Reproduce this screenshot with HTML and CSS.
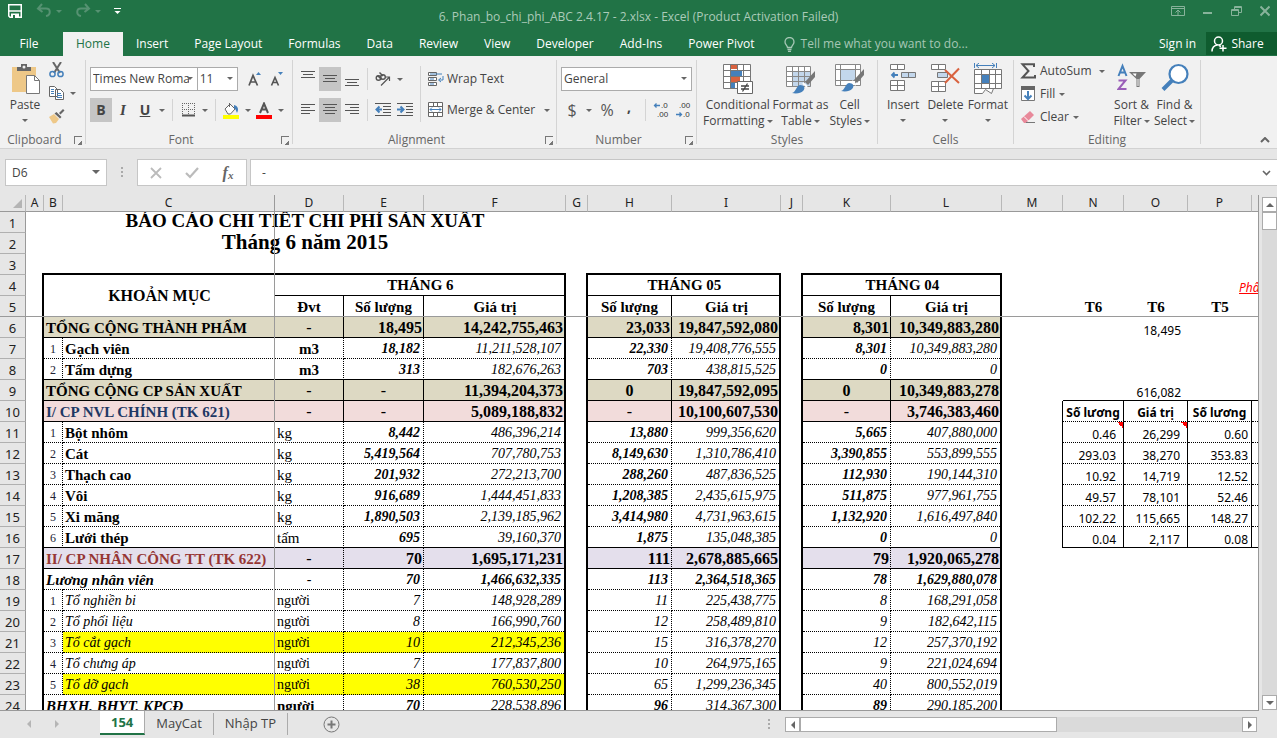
FILE: index.html
```html
<!DOCTYPE html>
<html lang="en">
<head>
<meta charset="utf-8">
<title>6. Phan_bo_chi_phi_ABC 2.4.17 - 2.xlsx - Excel</title>
<link rel="stylesheet" href="styles.css">
</head>
<body>
<header class="titlebar">
  <div class="quick">
    <button aria-label="Save"><svg width="16" height="16" viewBox="0 0 16 16"><path d="M1.75 1.75h12.5v12.5H3l-1.250-1.250z" fill="none" stroke="#fff" stroke-width="1.500"/><path d="M2 8h12" stroke="#fff" stroke-width="1.500"/><path d="M4 10.500h8V15H4z" fill="#fff"/><path d="M6 12h2v3H6z" fill="#217346"/></svg></button>
    <button class="dim split" aria-label="Undo"><svg width="16" height="16" viewBox="0 0 16 16"><path d="M6 1 2 5.500 6.500 9M2.500 5.500H10c5 0 5 6.500 0 7.500" fill="none" stroke="currentColor" stroke-width="2"/></svg><i class="caret"></i></button>
    <button class="dim split" aria-label="Redo"><svg width="16" height="16" viewBox="0 0 16 16"><path d="M10 1l4 4.500L9.500 9M13.500 5.500H6c-5 0-5 6.500 0 7.500" fill="none" stroke="currentColor" stroke-width="2"/></svg><i class="caret"></i></button>
    <button aria-label="Customize"><svg width="7" height="8" viewBox="0 0 7 8"><path d="M0 1.500h7" stroke="#fff"/><path d="M.5 4h6l-3 3z" fill="#fff"/></svg></button>
  </div>
  <h1>6. Phan_bo_chi_phi_ABC 2.4.17 - 2.xlsx - Excel (Product Activation Failed)</h1>
  <div class="window">
    <button aria-label="Ribbon options"><svg width="14" height="12" viewBox="0 0 14 12" fill="none" stroke="currentColor"><path d="M.5 1.500h13v9H.5zM1 3.500h12M7 10V5M4.500 7.500 7 5l2.500 2.500"/></svg></button>
    <button aria-label="Minimize"><svg width="10" height="12" viewBox="0 0 10 12"><path d="M0 7h9v2H0z" fill="currentColor"/></svg></button>
    <button aria-label="Restore"><svg width="11" height="12" viewBox="0 0 11 12" fill="none" stroke="currentColor"><path d="M.5 4.500h7v6h-7zM.5 5.500h7M3.500 4V1.500h7v6H8M3.500 2.500h7"/></svg></button>
    <button aria-label="Close"><svg width="10" height="12" viewBox="0 0 10 12" fill="none" stroke="currentColor" stroke-width="2"><path d="M.5 1.500l9 9M9.500 1.500l-9 9"/></svg></button>
  </div>
</header>
<nav class="tabs">
  <button class="file">File</button><button class="on">Home</button><button>Insert</button><button>Page Layout</button><button>Formulas</button><button>Data</button><button>Review</button><button>View</button><button>Developer</button><button>Add-Ins</button><button>Power Pivot</button>
  <button class="tell"><svg width="11" height="15" viewBox="0 0 11 15" fill="none" stroke="currentColor" stroke-width="1.300"><path d="M3.500 10.500C3.500 8.500 1 7.500 1 5a4.500 4.500 0 0 1 9 0c0 2.500-2.500 3.500-2.500 5.500zM3.500 12.500h4M4 14.300h3"/></svg>Tell me what you want to do...</button>
  <button class="sign">Sign in</button>
  <button class="share"><svg width="16" height="16" viewBox="0 0 16 16" fill="none" stroke="#fff" stroke-width="1.500"><circle cx="7.500" cy="5" r="4"/><path d="M1 15.500c0-4 2-6 5.500-6.500M8 9.500l2 1M12 9v6.500M8.500 12.300H15.500"/></svg>Share</button>
</nav>

<section class="ribbon">
  <div class="group clipboard">
    <div class="body">
      <button class="big"><svg width="32" height="32" viewBox="-2 0 32 32"><path d="M1 4h24v25H1z" fill="#eec888"/><path d="M6 8V4h4V1h6v3h4v4z" fill="#666"/><circle cx="13" cy="4" r="1.500" fill="#f1f1f1"/><path d="M15.500 12.500h8l5 5v13h-13z" fill="#fff" stroke="#777"/><path d="M23.500 12.500v5h5" fill="none" stroke="#777"/></svg><span>Paste</span><i class="caret"></i></button>
      <div class="stack clip">
        <button aria-label="Cut"><svg width="16" height="16" viewBox="0 0 16 16" fill="none"><path d="M4 0l7 11M12 0 5 11" stroke="#666" stroke-width="2"/><circle cx="3.500" cy="12" r="2.600" stroke="#4580bb" stroke-width="1.500"/><circle cx="11.500" cy="12" r="2.600" stroke="#4580bb" stroke-width="1.500"/></svg></button>
        <button class="split" aria-label="Copy"><svg width="16" height="16" viewBox="0 0 16 16" fill="#fff" stroke="#666"><path d="M.5 1.500h5l3 3v7h-8zM6.500 4.500h5l3 3v7h-8z"/><path d="M2 4.500h3M2 6.500h3M2 8.500h3M8 8.500h4M8 10.500h5M8 12.500h5" stroke="#4580bb"/></svg><i class="caret"></i></button>
        <button aria-label="Format Painter"><svg width="16" height="16" viewBox="0 0 16 16"><path d="M0 9l5-3 5 5-3 4-3 .5z" fill="#eec888"/><path d="M5.500 5.500l2-1.500 5 5-1.500 1.500zM10 5l4-4 1.500 1.500-4 4z" fill="#666"/></svg></button>
      </div>
    </div>
    <footer><span>Clipboard</span><button class="launch" aria-label="Clipboard settings"></button></footer>
  </div>

  <div class="group font">
    <div class="body rows">
      <div class="row">
        <label class="combo face"><select aria-label="Font"><option>Times New Roma</option></select></label><label class="combo size"><select aria-label="Font size"><option>11</option></select></label>
        <button class="tool grow" aria-label="Increase font size"><svg width="14" height="16" viewBox="0 0 14 16"><path d="M1 14.500 5 4.500 9.500 14.500M2.500 11h5.500" fill="none" stroke="#555" stroke-width="1.700"/><path d="M8 4l2.500-3L13 4z" fill="#4580bb"/></svg></button>
        <button class="tool" aria-label="Decrease font size"><svg width="14" height="16" viewBox="0 0 14 16"><path d="M1.500 14.500 5 6.500l3.500 8M3 11.500h4.500" fill="none" stroke="#555" stroke-width="1.600"/><path d="M8 1l2.500 3L13 1z" fill="#4580bb"/></svg></button>
      </div>
      <div class="row">
        <button class="tool on"><b>B</b></button><button class="tool ital">I</button><button class="tool"><u>U</u></button><button class="drop" aria-label="Underline options"><i class="caret"></i></button><i class="sep"></i>
        <button class="tool" aria-label="Borders"><svg width="13" height="14" viewBox="0 0 13 14" fill="none" stroke="#666"><path d="M.5 0v12M6.500 0v12M12.500 0v12M0 .5h13M0 6.500h13" stroke-dasharray="1 1"/><path d="M0 12.500h13" stroke-width="2" stroke="#555"/></svg></button><button class="drop" aria-label="Border options"><i class="caret"></i></button><i class="sep"></i>
        <button class="tool" aria-label="Fill Color"><svg width="16" height="17" viewBox="0 0 16 17"><path d="M2 7l5-5 5 5-4.500 5H5z" fill="#fff" stroke="#666"/><path d="M6.500 5V1" stroke="#666"/><path d="M11 3c4 1 5 4 3 8-1-2-1-4-3-5z" fill="#4580bb"/><path d="M0 13h16v4H0z" fill="#ff0"/></svg></button><button class="drop" aria-label="Fill options"><i class="caret"></i></button>
        <button class="tool" aria-label="Font Color"><svg width="16" height="17" viewBox="0 0 16 17"><path d="M4 11 8 1.500 12 11M5.500 7.500h5.500" fill="none" stroke="#555" stroke-width="2"/><path d="M0 13h16v4H0z" fill="#f00"/></svg></button><button class="drop" aria-label="Font color options"><i class="caret"></i></button>
      </div>
    </div>
    <footer><span>Font</span><button class="launch" aria-label="Font settings"></button></footer>
  </div>

  <div class="group align">
    <div class="body">
      <div class="rows">
        <div class="row">
          <button class="tool" aria-label="Top Align"><svg width="14" height="16" viewBox="0 0 14 16" stroke="#555"><path d="M0 .5h14M2 3.500h10M0 6.500h14"/></svg></button><button class="tool on" aria-label="Middle Align"><svg width="14" height="16" viewBox="0 0 14 16" stroke="#555"><path d="M0 4.500h14M2 7.500h10M0 10.500h14"/></svg></button><button class="tool" aria-label="Bottom Align"><svg width="14" height="16" viewBox="0 0 14 16" stroke="#555"><path d="M0 8.500h14M2 11.500h10M0 14.500h14"/></svg></button><i class="sep"></i>
          <button class="tool" aria-label="Orientation"><svg width="18" height="16" viewBox="0 0 18 16"><g fill="none" stroke="#555" stroke-width="1.400"><circle cx="4.500" cy="7" r="2.300"/><path d="M3.500 4.500 7.500 8.500"/><circle cx="9" cy="6" r="2.300"/><path d="M5.500 1.500 9 5"/></g><path d="M7 14.500 15 6.500M11.500 6H15.500V10" fill="none" stroke="#555" stroke-width="1.200"/></svg></button><button class="drop" aria-label="Orientation options"><i class="caret"></i></button>
        </div>
        <div class="row">
          <button class="tool" aria-label="Align Left"><svg width="14" height="14" viewBox="0 0 14 14" stroke="#555"><path d="M0 1.500h14M0 4.500h9M0 7.500h14M0 10.500h9"/></svg></button><button class="tool on" aria-label="Center"><svg width="14" height="14" viewBox="0 0 14 14" stroke="#555"><path d="M0 1.500h14M2 4.500h10M0 7.500h14M2 10.500h10"/></svg></button><button class="tool" aria-label="Align Right"><svg width="14" height="14" viewBox="0 0 14 14" stroke="#555"><path d="M0 1.500h14M5 4.500h9M0 7.500h14M5 10.500h9"/></svg></button><i class="sep"></i>
          <button class="tool" aria-label="Decrease Indent"><svg width="16" height="14" viewBox="0 0 16 14"><path d="M0 .5h16M8 3.500h8M8 6.500h8M8 9.500h8M0 12.500h16" stroke="#555"/><path d="M7 6.500H2M4.500 3.500l-3 3 3 3" fill="none" stroke="#4580bb" stroke-width="2"/></svg></button><button class="tool" aria-label="Increase Indent"><svg width="16" height="14" viewBox="0 0 16 14"><path d="M0 .5h16M9 3.500h7M9 6.500h7M9 9.500h7M0 12.500h16" stroke="#555"/><path d="M0 6.500h6M3.500 3.500l3 3-3 3" fill="none" stroke="#4580bb" stroke-width="2"/></svg></button>
        </div>
      </div>
      <i class="sep tall"></i>
      <div class="rows wide">
        <button class="row"><svg width="16" height="16" viewBox="0 0 16 16" fill="#fff" stroke="#666"><path d="M.5 1.500h8v3h-8zM.5 6.500h8v3h-8zM.5 11.500h8v3h-8z"/><path d="M2 3h12M2 8h4M2 13h4M15 5v4h-4M13 7l-2.500 2 2.500 2" fill="none" stroke="#4580bb"/></svg><span>Wrap Text</span></button>
        <button class="row"><svg width="16" height="16" viewBox="0 0 16 16" fill="#fff" stroke="#666"><path d="M.5.5h14v14H.5zM.5 4.500h14M.5 10.500h14M5.500.5v4M9.500.5v4M5.500 10.500v4M9.500 10.500v4"/><path d="M2 7.500h11M4 5.500l-2 2 2 2M11 5.500l2 2-2 2" fill="none" stroke="#4580bb"/></svg><span>Merge &amp; Center</span><i class="caret"></i></button>
      </div>
    </div>
    <footer><span>Alignment</span><button class="launch" aria-label="Alignment settings"></button></footer>
  </div>

  <div class="group number">
    <div class="body rows">
      <div class="row"><label class="combo fmt"><select aria-label="Number format"><option>General</option></select></label></div>
      <div class="row"><button class="tool sym">$</button><button class="drop" aria-label="Currency options"><i class="caret"></i></button><button class="tool sym pct">%</button><button class="tool sym comma"><b>,</b></button><i class="sep"></i><button class="tool" aria-label="Increase Decimal"><svg width="16" height="20" viewBox="0 0 16 20"><text x="8" y="8">.0</text><text x="4" y="17">.00</text><path d="M7 5.500H1.500M3.500 3.500l-2 2 2 2" fill="none" stroke="#4580bb" stroke-width="1.300"/></svg></button><button class="tool" aria-label="Decrease Decimal"><svg width="16" height="20" viewBox="0 0 16 20"><text x="4" y="8">.00</text><text x="8" y="17">.0</text><path d="M1 14.500h5.500M4.500 12.500l2 2-2 2" fill="none" stroke="#4580bb" stroke-width="1.300"/></svg></button></div>
    </div>
    <footer><span>Number</span><button class="launch" aria-label="Number settings"></button></footer>
  </div>

  <div class="group styles">
    <div class="body">
      <button class="big"><svg width="30" height="32" viewBox="0 0 30 32"><path d="M.5 1.500h27v24H.5z" fill="#fff"/><path d="M8 2h6v4H8zM8 14h9v5H8z" fill="#d9623f"/><path d="M8 8h11v5H8zM8 20h4v5H8z" fill="#4580bb"/><path d="M.5 1.500h27v24H.5zM.5 7.500h27M.5 13.500h27M.5 19.500h27M7.500 1v25M14.500 1v6M20.500 1v25" fill="none" stroke="#777"/><path d="M14.500 18.500h15v12h-15z" fill="#fff" stroke="#666"/><path d="M18 23h8M18 26h8M24.500 20.500l-5 8" stroke="#444" stroke-width="1.300"/></svg><span>Conditional</span><span>Formatting<i class="caret"></i></span></button>
      <button class="big"><svg width="30" height="32" viewBox="0 0 30 32"><path d="M.5 3.500h24v20H.5z" fill="#fff"/><path d="M7 9h18v15H7z" fill="#c3d7ec"/><path d="M.5 3.500h24v20H.5zM.5 8.500h24M.5 13.500h24M.5 18.500h24M6.500 3v21M12.500 3v21M18.500 3v21" fill="none" stroke="#888"/><path d="M29 8v6l-7 8-3-3z" fill="#777"/><path d="M6 30c4-1 4-7 8-8 4 0 6 3 3 6-2 2-6 3-11 2z" fill="#4580bb"/><path d="M17 20l4 4" stroke="#fff" stroke-width="2"/></svg><span>Format as</span><span>Table<i class="caret"></i></span></button>
      <button class="big"><svg width="30" height="32" viewBox="0 0 30 32"><path d="M.5 1.500h25v21H.5z" fill="#fff"/><path d="M6 7h14v11H6z" fill="#c3d7ec"/><path d="M.5 1.500h25v21H.5zM.5 6.500h25M.5 17.500h25M5.500 1v22M20.500 1v22" fill="none" stroke="#888"/><path d="M29 6v6l-7 8-3-3z" fill="#777"/><path d="M6 28c4-1 4-7 8-8 4 0 6 3 3 6-2 2-6 3-11 2z" fill="#4580bb"/><path d="M17 18l4 4" stroke="#fff" stroke-width="2"/></svg><span>Cell</span><span>Styles<i class="caret"></i></span></button>
    </div>
    <footer><span>Styles</span></footer>
  </div>

  <div class="group cells">
    <div class="body">
      <button class="big"><svg width="28" height="32" viewBox="0 0 28 32" fill="#fff" stroke="#777"><path d="M1.500 1.500h14v5h-14zM8.500 1v6M1.500 17.500h14v10h-14zM8.500 17v11M1.500 22.500h14"/><path d="M12.500 9.500h14v5h-14zM19.500 9v6" fill="#c3d7ec"/><path d="M9 12H3M5.500 9.500 3 12l2.500 2.500" fill="none" stroke="#4580bb" stroke-width="1.800"/></svg><span>Insert</span><i class="caret"></i></button>
      <button class="big"><svg width="30" height="32" viewBox="0 0 30 32" fill="#fff" stroke="#777"><path d="M1.500 1.500h14v5h-14zM8.500 1v6M1.500 18.500h14v10h-14zM8.500 18v11M1.500 23.500h14"/><path d="M7.500 9.500h10v5h-10z" fill="#c3d7ec"/><path d="M15 7l14 13M29 5.500 15 20" stroke="#d9623f" stroke-width="2"/></svg><span>Delete</span><i class="caret"></i></button>
      <button class="big"><svg width="30" height="32" viewBox="0 0 30 32" fill="#fff" stroke="#777"><path d="M1.500 6.500h27v19h-27zM1.500 11.500h27M1.500 20.500h27M8.500 6v20M16.500 6v20M22.500 6v20M1.500 25.500v5h8l3-4 6 4 2-5"/><path d="M9 12h7v8H9z" fill="#4580bb" stroke="none"/><path d="M1.500 0v5M23.500 0v5M3 2.500h19M6 0 3 2.500 6 5M19 0l3 2.500L19 5" fill="none" stroke="#4580bb"/></svg><span>Format</span><i class="caret"></i></button>
    </div>
    <footer><span>Cells</span></footer>
  </div>

  <div class="group editing">
    <div class="body">
      <div class="stack edit">
        <button><svg width="16" height="16" viewBox="0 0 16 16"><path d="M14 4V1.300H2.500L8.500 8l-6 6.500H15V12" fill="none" stroke="#555" stroke-width="2"/></svg><span>AutoSum</span><i class="caret far"></i></button>
        <button><svg width="16" height="16" viewBox="0 0 16 16"><path d="M1.500 1.500h13v13h-13z" fill="#fff" stroke="#777"/><path d="M1 0h14v4H1z" fill="#666"/><path d="M8 5v8M4.500 9.500 8 13l3.500-3.500" fill="none" stroke="#4580bb" stroke-width="2"/></svg><span>Fill</span><i class="caret"></i></button>
        <button><svg width="16" height="16" viewBox="0 0 16 16"><path d="M1 10 10 2l4 4-8 8H4z" fill="#e8899a"/><path d="M4 7.500 8.500 12" stroke="#fff"/><path d="M6 13.500h9" stroke="#777"/></svg><span>Clear</span><i class="caret"></i></button>
      </div>
      <button class="big"><svg width="30" height="32" viewBox="0 0 30 32" fill="none"><path d="M1.500 13 5.500 3l4 10M3 9.500h5.500" stroke="#4580bb" stroke-width="2"/><path d="M1.500 17.500h7l-7 8.500h8" stroke="#9a5fb8" stroke-width="2"/><path d="M12 9h17l-6.500 7v8h-3v-8z" fill="#777"/><path d="M15.500 10.500h4l-1 3zM20.500 16h1v7h-1z" fill="#fff"/></svg><span>Sort &amp;</span><span>Filter<i class="caret"></i></span></button>
      <button class="big"><svg width="28" height="32" viewBox="0 0 28 32" fill="none" stroke="#4580bb"><circle cx="17.500" cy="11" r="9" fill="#fff" stroke-width="2.200"/><path d="M11 17.500 2 26.500" stroke-width="4"/></svg><span>Find &amp;</span><span>Select<i class="caret"></i></span></button>
    </div>
    <footer><span>Editing</span></footer>
  </div>
  <button class="collapse" aria-label="Collapse ribbon"><svg width="10" height="6" viewBox="0 0 10 6"><path d="M1 5l4-4 4 4" fill="none" stroke="#666" stroke-width="2"/></svg></button>
</section>

<section class="formula">
  <label class="combo name"><input aria-label="Name box" value="D6"></label>
  <i class="dots"></i>
  <div class="fx">
    <button aria-label="Cancel"><svg width="12" height="12" viewBox="0 0 12 12"><path d="M1 1l10 10M11 1 1 11" stroke="#bbb" stroke-width="1.800"/></svg></button>
    <button aria-label="Enter"><svg width="14" height="12" viewBox="0 0 14 12"><path d="M1 6l4 4 8-9" fill="none" stroke="#bbb" stroke-width="2.200"/></svg></button>
    <button class="fn" aria-label="Insert Function">f<small>x</small></button>
  </div>
  <div class="entry"><input aria-label="Formula bar" value="-"><svg width="9" height="6" viewBox="0 0 9 6"><path d="M1 1l3.500 3.500L8 1" fill="none" stroke="#666" stroke-width="1.600"/></svg></div>
</section>

<main class="work">
  <div class="sheet">
    <i class="freeze-x"></i><i class="freeze-y"></i>
    <table>
      <colgroup><col class="w26"><col class="w18"><col class="w19"><col class="w212"><col class="w69"><col class="w80"><col class="w142"><col class="w22"><col class="w84"><col class="w109"><col class="w22"><col class="w88"><col class="w111"><col class="w61"><col class="w61"><col class="w64"><col class="w64"><col class="w64"></colgroup>
      <thead><tr><th class="corner"><svg width="9" height="9" viewBox="0 0 9 9"><path d="M9 0v9H0z" fill="#b4b4b4"/></svg><th>A<th>B<th>C<th>D<th>E<th>F<th>G<th>H<th>I<th>J<th>K<th>L<th>M<th>N<th>O<th>P<th></tr></thead>
      <tbody>
      <tr class="plain"><th>1<td><td colspan="5" class="title">BÁO CÁO CHI TIẾT CHI PHÍ SẢN XUẤT<td colspan="11"></tr>
      <tr class="plain"><th>2<td><td colspan="5" class="title sub">Tháng 6 năm 2015<td colspan="11"></tr>
      <tr class="plain"><th>3<td class="joint"><td colspan="5" class="under"><td class="joint"><td colspan="2" class="under"><td class="joint"><td colspan="2" class="under"><td colspan="5"></tr>
      <tr class="plain"><th>4<td class="edge"><td colspan="2" rowspan="2" class="head main-head">KHOẢN MỤC<td colspan="3" class="head line edge">THÁNG 6<td class="edge"><td colspan="2" class="head line edge">THÁNG 05<td class="edge"><td colspan="2" class="head line edge">THÁNG 04<td><td><td><td class="note">Phân bổ<td></tr>
      <tr class="plain"><th>5<td class="edge"><td class="head side">Đvt<td class="head side">Số lượng<td class="head edge">Giá trị<td class="edge"><td class="head side">Số lượng<td class="head edge">Giá trị<td class="edge"><td class="head side">Số lượng<td class="head edge">Giá trị<td><td class="head">T6<td class="head">T6<td class="head">T5<td></tr>
      <tr class="r total tan"><th>6<td><td>TỔNG CỘNG THÀNH PHẨM<td><td>-<td>18,495<td>14,242,755,463<td><td>23,033<td>19,847,592,080<td><td>8,301<td>10,349,883,280<td><td><td>18,495<td><td></tr>
      <tr class="r item"><th>7<td><td>1<td>Gạch viên<td class="mid">m3<td>18,182<td>11,211,528,107<td><td>22,330<td>19,408,776,555<td><td>8,301<td>10,349,883,280<td><td><td><td><td></tr>
      <tr class="r item last"><th>8<td><td>2<td>Tấm dựng<td class="mid">m3<td>313<td>182,676,263<td><td>703<td>438,815,525<td><td>0<td>0<td><td><td><td><td></tr>
      <tr class="r total tan"><th>9<td><td>TỔNG CỘNG CP SẢN XUẤT<td><td>-<td class="mid dash">-<td>11,394,204,373<td><td class="mid">0<td>19,847,592,095<td><td class="mid">0<td>10,349,883,278<td><td class="bt"><td class="bt">616,082<td class="bt"><td class="bt"></tr>
      <tr class="r total pink box boxhead"><th>10<td><td>I/ CP NVL CHÍNH (TK 621)<td><td>-<td class="mid dash">-<td>5,089,188,832<td><td class="mid dash">-<td>10,100,607,530<td><td class="mid dash">-<td>3,746,383,460<td><td>Số lương<td>Giá trị<td>Số lương<td></tr>
      <tr class="r item box"><th>11<td><td>1<td>Bột nhôm<td>kg<td>8,442<td>486,396,214<td><td>13,880<td>999,356,620<td><td>5,665<td>407,880,000<td><td class="flag">0.46<td class="flag">26,299<td>0.60<td></tr>
      <tr class="r item box"><th>12<td><td>2<td>Cát<td>kg<td>5,419,564<td>707,780,753<td><td>8,149,630<td>1,310,786,410<td><td>3,390,855<td>553,899,555<td><td>293.03<td>38,270<td>353.83<td></tr>
      <tr class="r item box"><th>13<td><td>3<td>Thạch cao<td>kg<td>201,932<td>272,213,700<td><td>288,260<td>487,836,525<td><td>112,930<td>190,144,310<td><td>10.92<td>14,719<td>12.52<td></tr>
      <tr class="r item box"><th>14<td><td>4<td>Vôi<td>kg<td>916,689<td>1,444,451,833<td><td>1,208,385<td>2,435,615,975<td><td>511,875<td>977,961,755<td><td>49.57<td>78,101<td>52.46<td></tr>
      <tr class="r item box"><th>15<td><td>5<td>Xi măng<td>kg<td>1,890,503<td>2,139,185,962<td><td>3,414,980<td>4,731,963,615<td><td>1,132,920<td>1,616,497,840<td><td>102.22<td>115,665<td>148.27<td></tr>
      <tr class="r item box last"><th>16<td><td>6<td>Lưới thép<td>tấm<td>695<td>39,160,370<td><td>1,875<td>135,048,385<td><td>0<td>0<td><td>0.04<td>2,117<td>0.08<td></tr>
      <tr class="r total lilac"><th>17<td><td>II/ CP NHÂN CÔNG TT (TK 622)<td><td>-<td>70<td>1,695,171,231<td><td>111<td>2,678,885,665<td><td>79<td>1,920,065,278<td><td><td><td><td></tr>
      <tr class="r staff lead"><th>18<td><td>Lương nhân viên<td><td class="mid">-<td>70<td>1,466,632,335<td><td>113<td>2,364,518,365<td><td>78<td>1,629,880,078<td><td><td><td><td></tr>
      <tr class="r staff"><th>19<td><td>1<td>Tổ nghiền bi<td>người<td>7<td>148,928,289<td><td>11<td>225,438,775<td><td>8<td>168,291,058<td><td><td><td><td></tr>
      <tr class="r staff"><th>20<td><td>2<td>Tổ phối liệu<td>người<td>8<td>166,990,760<td><td>12<td>258,489,810<td><td>9<td>182,642,115<td><td><td><td><td></tr>
      <tr class="r staff mark"><th>21<td><td>3<td>Tổ cắt gạch<td>người<td>10<td>212,345,236<td><td>15<td>316,378,270<td><td>12<td>257,370,192<td><td><td><td><td></tr>
      <tr class="r staff"><th>22<td><td>4<td>Tổ chưng áp<td>người<td>7<td>177,837,800<td><td>10<td>264,975,165<td><td>9<td>221,024,694<td><td><td><td><td></tr>
      <tr class="r staff mark"><th>23<td><td>5<td>Tổ dỡ gạch<td>người<td>38<td>760,530,250<td><td>65<td>1,299,236,345<td><td>40<td>800,552,019<td><td><td><td><td></tr>
      <tr class="r staff lead half"><th>24<td><td>BHXH, BHYT, KPCĐ<td><td>người<td>70<td>228,538,896<td><td>96<td>314,367,300<td><td>89<td>290,185,200<td><td><td><td><td></tr>
      </tbody>
    </table>
  </div>
  <div class="vscroll"><button class="up" aria-label="Scroll up"></button><i class="thumb"></i><button class="down" aria-label="Scroll down"></button></div>
</main>

<footer class="status">
  <div class="nav"><button class="left" aria-label="Previous sheet"></button><button class="right" aria-label="Next sheet"></button></div>
  <button class="tab on">154</button><button class="tab">MayCat</button><button class="tab">Nhập TP</button>
  <button class="add" aria-label="New sheet"><svg width="17" height="17" viewBox="0 0 17 17" fill="none" stroke="#777"><circle cx="8.500" cy="8.500" r="7.500"/><path d="M4.500 8.500h8M8.500 4.500v8" stroke-width="2"/></svg></button>
  <i class="dots"></i>
  <div class="hscroll"><button class="left" aria-label="Scroll left"></button><i class="thumb"></i><button class="right" aria-label="Scroll right"></button></div>
</footer>
</body>
</html>
```

FILE: styles.css
```css
* { box-sizing: border-box; }
body { margin: 0; height: 100vh; display: flex; flex-direction: column; overflow: hidden; background: #e6e6e6; color: #444; font: 12px/16px "Open Sans", "Noto Sans", sans-serif; }
button, input, select { font: inherit; color: inherit; background: none; border: 0; padding: 0; margin: 0; border-radius: 0; }
button { display: flex; align-items: center; justify-content: center; white-space: nowrap; }
svg { display: block; flex: none; }
svg text { font: 8px "Liberation Sans", sans-serif; fill: #333; }
.caret { flex: none; width: 0; height: 0; border: 3px solid transparent; border-top-color: #666; border-bottom: 0; }

.titlebar { display: grid; grid-template-columns: 1fr auto 1fr; align-items: center; height: 32px; background: #217346; color: #fff; }
.titlebar h1 { margin: 0; padding-top: 2px; font-size: 12px; font-weight: 400; color: #abcbb9; }
.quick { display: flex; align-items: center; gap: 13px; padding: 0 0 10px 7px; }
.quick .split { gap: 4px; }
.dim { color: #569272; }
.dim .caret { border-top-color: #569272; }
.window { display: flex; justify-content: flex-end; gap: 18px; padding: 0 7px 10px 0; color: #88b39b; }

.tabs { display: flex; height: 24px; background: #217346; color: #fff; }
.tabs button { padding: 0 13px; }
.tabs .file { width: 63px; padding: 0 5px 0 0; }
.tabs .on { background: #f1f1f1; color: #217346; }
.tabs .tell { color: #a6c7b5; gap: 6px; padding-left: 16px; }
.tabs .sign { margin-left: auto; padding: 0 10px; }
.tabs .share { width: 71px; height: 23px; padding: 0 8px 0 0; gap: 4px; background: #0f5c2f; }

.ribbon { display: flex; flex: none; height: 93px; padding-top: 4px; background: #f1f1f1; border-bottom: 1px solid #d2d2d2; }
.group { flex: none; display: flex; flex-direction: column; height: 84px; border-right: 1px solid #d4d4d4; }
.body { flex: 1; min-height: 0; display: flex; padding: 0 4px; }
.group footer { position: relative; display: flex; justify-content: center; height: 8px; line-height: 8px; color: #666; }
.launch { position: absolute; right: 3px; top: 0; width: 8px; height: 8px; border-left: 1px solid #777; border-top: 1px solid #777; }
.launch::after { content: ""; width: 5px; height: 5px; margin: 3px 0 0 2px; background: linear-gradient(135deg, transparent 50%, #777 50%); }
.clipboard { width: 86px; }
.clipboard footer { padding-right: 16px; }
.font { width: 207px; }
.font footer, .number footer, .align footer { padding-right: 16px; }
.align { width: 264px; }
.number { width: 140px; }
.styles { width: 181px; }
.cells { width: 136px; }
.editing { width: 187px; }
.big { flex-direction: column; justify-content: flex-start; width: 42px; padding-top: 3px; }
.big svg { margin-bottom: 2px; }
.big span { display: flex; align-items: center; gap: 2px; }
.big > .caret { margin-top: 6px; }
.stack { display: flex; flex-direction: column; }
.clip { gap: 7px; padding: 2px 0 0 3px; align-items: flex-start; }
.clip .split { gap: 5px; }
.rows { display: flex; flex-direction: column; gap: 7px; padding-top: 7px; }
.row { display: flex; align-items: center; justify-content: flex-start; height: 24px; }
.tool { width: 22px; height: 24px; flex: none; }
.tool.on { background: #c5c5c5; }
.tool b, .tool u { font-size: 14px; font-weight: 700; color: #444; }
.tool.ital { font: italic 700 15px "Liberation Serif", serif; }
.tool.grow { margin-left: 6px; }
.tool.sym { font-size: 16px; color: #555; }
.tool.comma { padding-bottom: 6px; }
.drop { width: 11px; height: 24px; flex: none; }
.sep { flex: none; width: 1px; height: 22px; margin: 0 4px 0 5px; background: #d4d4d4; }
.sep.tall { height: 56px; margin: 6px 7px 0 4px; }
.align .row .sep { margin: 0 4px; }
.wide .row { gap: 3px; }
.wide .row .caret { margin-left: 6px; }
.combo { position: relative; display: flex; height: 24px; border: 1px solid #ababab; background: #fff; }
.combo::after { content: ""; position: absolute; right: 4px; top: 9px; border: 3px solid transparent; border-top-color: #666; border-bottom: 0; }
.combo select, .combo input { appearance: none; width: 100%; padding: 0 12px 0 2px; outline: 0; }
.face { width: 112px; }
.face select { padding-right: 8px; }
.size { width: 43px; margin-left: -1px; }
.fmt { width: 132px; }
.number .pct { margin: 0 0 0 2px; }
.styles .body { padding: 0 6px; }
.styles .big { width: 48px; }
.styles .big:first-child { width: 70px; }
.styles .big:nth-child(2) { width: 58px; }
.cells .big { width: 43px; }
.editing .body { padding-left: 6px; }
.edit { gap: 7px; padding-top: 3px; width: 90px; }
.edit button { justify-content: flex-start; gap: 4px; }
.edit .far { margin-left: 3px; }
.editing .big { width: 43px; }
.collapse { margin: auto 7px 5px auto; }

.formula { display: flex; flex: none; height: 46px; padding: 10px 0; }
.name, .fx, .entry { height: 27px; border: 1px solid #c6c6c6; background: #fff; }
.name { width: 102px; margin-left: 5px; }
.name::after { right: 6px; top: 10px; border-width: 4px; border-bottom: 0; }
.name input { padding-left: 6px; }
.dots { width: 2px; height: 11px; margin: 8px 14px; background: repeating-linear-gradient(#aaa 0 2px, transparent 2px 4px); }
.fx { display: flex; width: 110px; }
.fx button { flex: 1; }
.fn { font: italic 700 16px "Liberation Serif", serif; color: #666; }
.fn small { font-size: 11px; padding-top: 5px; }
.entry { flex: 1; display: flex; align-items: center; margin-left: 3px; border-right: 0; padding-right: 6px; }
.entry input { flex: 1; min-width: 0; padding-left: 11px; outline: 0; }

.work { flex: 1; min-height: 0; display: flex; }
.sheet { position: relative; flex: 1; min-width: 0; overflow: hidden; background: #fff; border-right: 1px solid #999; border-bottom: 1px solid #999; }
.freeze-x, .freeze-y { position: absolute; z-index: 1; background: #9a9a9a; }
.freeze-x { left: 274px; top: 0; bottom: 0; width: 1px; }
.freeze-y { left: 0; right: 0; top: 121px; height: 1px; }
table { table-layout: fixed; width: 1316px; border-collapse: separate; border-spacing: 0; color: #000; font: 15px/18px "Liberation Serif", serif; }
.w18 { width: 18px; } .w19 { width: 19px; } .w22 { width: 22px; } .w26 { width: 26px; } .w61 { width: 61px; } .w64 { width: 64px; } .w69 { width: 69px; } .w80 { width: 80px; } .w84 { width: 84px; } .w88 { width: 88px; } .w109 { width: 109px; } .w111 { width: 111px; } .w142 { width: 142px; } .w212 { width: 212px; }
th, td { padding: 0; white-space: nowrap; }
th { font: 12px/16px "Noto Sans", sans-serif; background: #e6e6e6; border-right: 1px solid #999; color: #222; }
thead th { height: 17px; border-right-color: #b8b8b8; border-bottom: 1px solid #999; }
.corner svg { margin-left: 13px; }
tbody th { height: 21px; font-size: 13px; border-bottom: 1px solid #b0b0b0; padding-top: 2px; }
td { height: 21px; }
.title { text-align: center; vertical-align: top; font-weight: 700; font-size: 19px; overflow: hidden; }
.title.sub { font-size: 21px; }
.under { border-bottom: 2px solid #000; }
.joint { background: linear-gradient(#000, #000) right bottom / 2px 2px no-repeat; }
.head { text-align: center; font-weight: 700; font-size: 15px; }
.main-head { font-size: 16px; }
.line { border-bottom: 1px solid #000; }
.side { border-right: 1px solid #000; }
.note { font: italic 12px/16px "Noto Sans", sans-serif; color: #f00; text-decoration: underline; padding: 4px 0 0 51px; overflow: visible; max-width: 0; }

/* Heavy frame: a 2px strip on the right that runs unbroken behind the row borders */
.edge, .r td:nth-child(2), .r td:nth-child(7), .r td:nth-child(8), .r td:nth-child(10), .r td:nth-child(11), .r td:nth-child(13) { background-image: linear-gradient(#000, #000); background-size: 2px 100%; background-position: right; background-repeat: no-repeat; background-origin: border-box; }

/* Data rows: one cell per column, A = 2nd child */
.r td { padding-top: 2px; }
.r td:nth-child(n+3):nth-child(-n+7), .r td:nth-child(9), .r td:nth-child(10), .r td:nth-child(12), .r td:nth-child(13) { border-bottom: 1px dotted #000; }
.r td:nth-child(5), .r td:nth-child(6), .r td:nth-child(9), .r td:nth-child(12) { border-right: 1px dotted #000; }
.r td:nth-child(n+6) { text-align: right; padding-right: 3px; font-size: 14px; font-style: italic; }
.r td:nth-child(7), .r td:nth-child(10), .r td:nth-child(13) { padding-right: 5px; }
.item td:nth-child(3), .staff:not(.lead) td:nth-child(3) { text-align: center; font-size: 12px; border-right: 1px dotted #000; color: #223; }
.r td:nth-child(4), .r td:nth-child(5) { padding-left: 2px; }
.item td:nth-child(4), .item td:nth-child(6), .item td:nth-child(9), .item td:nth-child(12), .item .mid { font-weight: 700; }
.last td:nth-child(n+3):nth-child(-n+7), .last td:nth-child(9), .last td:nth-child(10), .last td:nth-child(12), .last td:nth-child(13),
.total td:nth-child(n+3):nth-child(-n+7), .total td:nth-child(9), .total td:nth-child(10), .total td:nth-child(12), .total td:nth-child(13) { border-bottom: 1px solid #000; }
.total td:nth-child(n+3) { font-weight: 700; font-size: 16px; font-style: normal; padding-right: 1px; }
.total td:nth-child(7), .total td:nth-child(10), .total td:nth-child(13) { padding-right: 3px; }
.total td:nth-child(3), .lead td:nth-child(3) { padding-left: 2px; max-width: 0; font-size: 15px; font-weight: 700; }
.total td:nth-child(5) { text-align: center; padding: 2px 0 0; font-weight: 400; }
.r.r td.mid { text-align: center; padding: 2px 0 0; }
.r.r td.dash { font-weight: 400; }
.tan td:nth-child(5), .tan td:nth-child(6), .tan td:nth-child(9), .tan td:nth-child(12), .pink td:nth-child(5), .pink td:nth-child(6), .pink td:nth-child(9), .pink td:nth-child(12) { border-right-style: solid; }
.tan td:nth-child(n+3):nth-child(-n+7), .tan td:nth-child(9), .tan td:nth-child(10), .tan td:nth-child(12), .tan td:nth-child(13) { background-color: #ddd9c3; }
.pink td:nth-child(n+3):nth-child(-n+7), .pink td:nth-child(9), .pink td:nth-child(10), .pink td:nth-child(12), .pink td:nth-child(13) { background-color: #f2dcdb; }
.lilac td:nth-child(n+3):nth-child(-n+7), .lilac td:nth-child(9), .lilac td:nth-child(10), .lilac td:nth-child(12), .lilac td:nth-child(13) { background-color: #e4dfec; }
.pink td:nth-child(3) { color: #1f3864; }
.lilac td:nth-child(3) { color: #963634; }
.staff td:nth-child(4) { font-style: italic; font-size: 14px; }
.staff td:nth-child(5) { font-size: 14px; }
.lead td:nth-child(3) { font-style: italic; }
.lead td:nth-child(n+6) { font-weight: 700; }
.half td:nth-child(7), .half td:nth-child(10), .half td:nth-child(13) { font-weight: 400; }
.half td:nth-child(5) { font-weight: 700; font-size: 15px; }
.mark td:nth-child(n+4):nth-child(-n+7) { background-color: #ff0; }
.r td:nth-child(n+15) { font: 12px/15px "Noto Sans", sans-serif; padding: 5px 7px 0 0; }
.r td:nth-child(17) { padding-right: 3px; }
.box td:nth-child(14), .box td:nth-child(n+15) { border-right: 1px solid #000; }
.box td:nth-child(n+15) { border-bottom: 1px dotted #000; }
.box.last td:nth-child(n+15), .r td.bt { border-bottom: 1px solid #000; }
.boxhead td:nth-child(n+15) { font-weight: 700; text-align: center; padding: 2px 0 0; }
.flag { background: linear-gradient(45deg, transparent 50%, #f00 50%) top right / 6px 6px no-repeat; }

.vscroll { display: flex; flex-direction: column; width: 15px; margin: 2px 0 1px 3px; background: #dadada; }
.vscroll button, .hscroll button { width: 15px; height: 15px; flex: none; background: #fff; border: 1px solid #ababab; }
.vscroll .thumb { height: 18px; background: #fff; border: 1px solid #ababab; }
.down { margin-top: auto; }
.up::after, .down::after, .left::after, .right::after { content: ""; border: 4px solid transparent; }
.up::after { border-bottom-color: #666; border-top: 0; }
.down::after { border-top-color: #666; border-bottom: 0; }
.left::after { border-right-color: #666; border-left: 0; }
.right::after { border-left-color: #666; border-right: 0; }

.status { display: flex; align-items: flex-start; flex: none; height: 27px; font-size: 13px; }
.nav { display: flex; gap: 24px; width: 100px; height: 26px; padding-left: 27px; }
.nav .left::after { border-right-color: #b5b5b5; }
.nav .right::after { border-left-color: #b5b5b5; }
.tab { height: 22px; margin-top: 2px; padding: 0 11px 2px; border-right: 1px solid #ababab; }
.tab.on { height: 24px; margin: 0; background: #fff; color: #217346; font-weight: 700; border-bottom: 2px solid #217346; padding-bottom: 0; }
.add { margin: 5px 0 0 35px; }
.status .dots { margin: 8px 15px 0 auto; }
.hscroll { display: flex; width: 472px; margin: 6px 20px 0 0; background: #dadada; }
.hscroll .thumb { width: 257px; height: 15px; background: #fff; border: 1px solid #ababab; }
.hscroll .right { margin-left: auto; }
```
